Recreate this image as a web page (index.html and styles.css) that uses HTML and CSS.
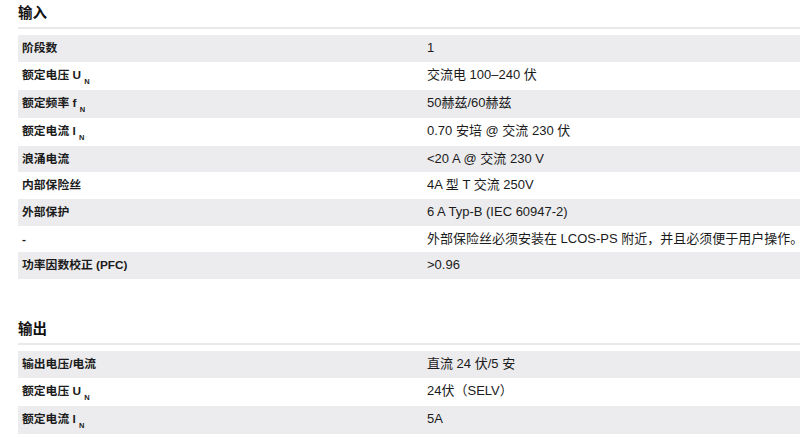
FILE: index.html
```html
<!DOCTYPE html>
<html lang="zh">
<head>
<meta charset="utf-8">
<title>技术数据</title>
<link rel="stylesheet" href="styles.css">
</head>
<body>
<section class="spec">
  <h2 class="spec-title">输入</h2>
  <table class="spec-table">
    <tr><th>阶段数</th><td>1</td></tr>
    <tr><th>额定电压 U <sub>N</sub></th><td>交流电 100–240 伏</td></tr>
    <tr><th>额定频率 f <sub>N</sub></th><td>50赫兹/60赫兹</td></tr>
    <tr><th>额定电流 I <sub>N</sub></th><td>0.70 安培 @ 交流 230 伏</td></tr>
    <tr><th>浪涌电流</th><td>&lt;20 A @ 交流 230 V</td></tr>
    <tr><th>内部保险丝</th><td>4A 型 T 交流 250V</td></tr>
    <tr><th>外部保护</th><td>6 A Typ-B (IEC 60947-2)</td></tr>
    <tr><th>-</th><td>外部保险丝必须安装在 LCOS-PS 附近，并且必须便于用户操作。</td></tr>
    <tr><th>功率因数校正 (PFC)</th><td>&gt;0.96</td></tr>
  </table>
</section>
<section class="spec">
  <h2 class="spec-title">输出</h2>
  <table class="spec-table">
    <tr><th>输出电压/电流</th><td>直流 24 伏/5 安</td></tr>
    <tr><th>额定电压 U <sub>N</sub></th><td>24伏（SELV）</td></tr>
    <tr><th>额定电流 I <sub>N</sub></th><td>5A</td></tr>
  </table>
</section>
</body>
</html>
```
FILE: styles.css
```css
html, body {
  margin: 0;
  padding: 0;
  background: #ffffff;
}
body {
  padding-left: 18px;
  overflow: hidden;
  font-family: "Liberation Sans", Arial, "Noto Sans CJK SC", sans-serif;
  color: #1b1b1b;
  font-size: 13px;
}
.spec {
  margin-bottom: 37px;
}
.spec-title {
  margin: 0;
  padding-top: 2px;
  font-size: 14.5px;
  line-height: 22px;
  height: 25px;
  font-weight: bold;
  color: #111;
  border-bottom: 2px solid #e9e9e9;
}
.spec-table {
  margin-top: 6px;
  width: 800px;
  border-collapse: collapse;
  table-layout: fixed;
}
.spec-table tr:nth-child(odd) {
  background: #ececee;
}
.spec-table th,
.spec-table td {
  padding: 4px 4px;
  line-height: 18.67px;
  text-align: left;
  vertical-align: middle;
  white-space: nowrap;
}
.spec-table th {
  width: 397px;
  font-size: 11.8px;
  font-weight: bold;
}
.spec-table td {
  font-weight: normal;
}
.spec-table sub {
  font-size: 7.5px;
  line-height: 8px;
  vertical-align: -5px;
}
```
